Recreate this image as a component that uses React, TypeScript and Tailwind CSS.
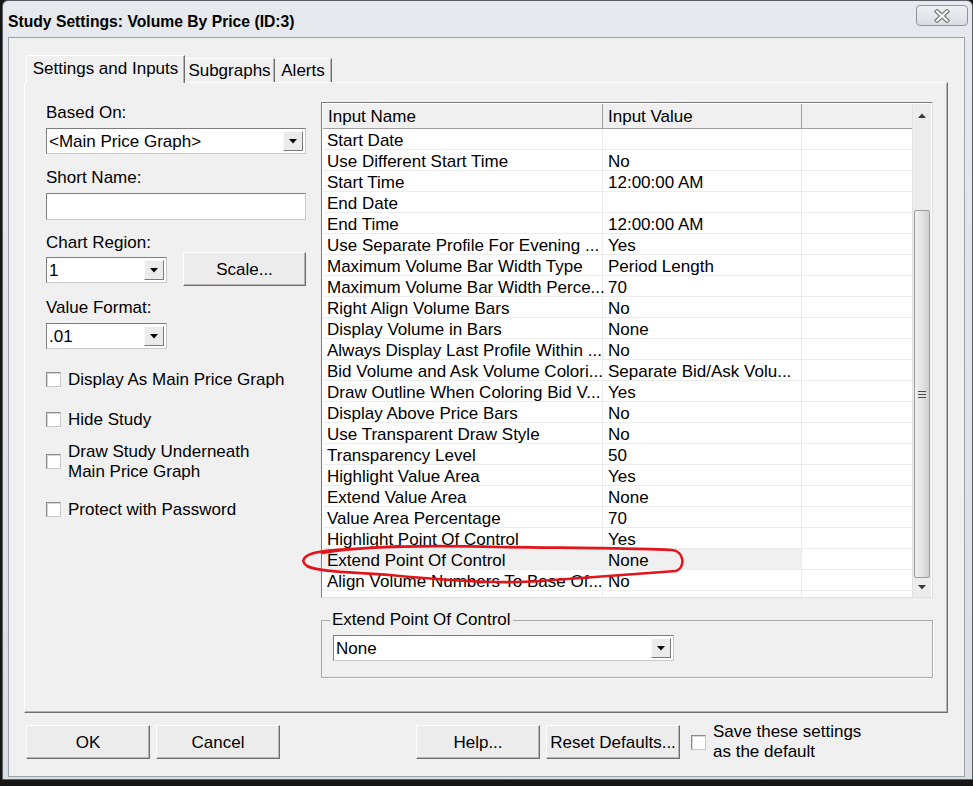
import React from "react";

const rows: [string, string][] = [
  ["Start Date", ""],
  ["Use Different Start Time", "No"],
  ["Start Time", "12:00:00 AM"],
  ["End Date", ""],
  ["End Time", "12:00:00 AM"],
  ["Use Separate Profile For Evening ...", "Yes"],
  ["Maximum Volume Bar Width Type", "Period Length"],
  ["Maximum Volume Bar Width Perce...", "70"],
  ["Right Align Volume Bars", "No"],
  ["Display Volume in Bars", "None"],
  ["Always Display Last Profile Within ...", "No"],
  ["Bid Volume and Ask Volume Colori...", "Separate Bid/Ask Volu..."],
  ["Draw Outline When Coloring Bid V...", "Yes"],
  ["Display Above Price Bars", "No"],
  ["Use Transparent Draw Style", "No"],
  ["Transparency Level", "50"],
  ["Highlight Value Area", "Yes"],
  ["Extend Value Area", "None"],
  ["Value Area Percentage", "70"],
  ["Highlight Point Of Control", "Yes"],
  ["Extend Point Of Control", "None"],
  ["Align Volume Numbers To Base Of...", "No"],
];

const SELECTED = 20;

function DownTri({ color = "#000" }: { color?: string }) {
  return (
    <svg width="8" height="5" viewBox="0 0 8 5">
      <path d="M0 0 L8 0 L4 4.5 Z" fill={color} />
    </svg>
  );
}

function Combo({ value, className }: { value: string; className: string }) {
  return (
    <div
      className={
        "flex items-stretch bg-white border border-t-[#7d7d7d] border-l-[#7d7d7d] border-r-[#c9c9c9] border-b-[#c9c9c9] " +
        className
      }
    >
      <div className="flex-1 flex items-center pl-[2px] pt-[2px] leading-[20px] whitespace-nowrap overflow-hidden">
        {value}
      </div>
      <div className="w-[20px] m-[2px] flex items-center justify-center bg-[#ebebeb] border border-t-[#fafafa] border-l-[#fafafa] border-r-[#7a7a7a] border-b-[#7a7a7a]">
        <DownTri />
      </div>
    </div>
  );
}

function Btn({ label, className }: { label: string; className: string }) {
  return (
    <button
      type="button"
      className={
        "h-[34px] flex items-center justify-center pt-[2px] bg-[#ececec] border border-t-[#fdfdfd] border-l-[#fdfdfd] border-r-[#6e6e6e] border-b-[#6e6e6e] shadow-[inset_-1px_-1px_0_#b4b4b4] leading-[20px] text-black " +
        className
      }
    >
      {label}
    </button>
  );
}

function Check() {
  return (
    <div className="w-[15px] h-[15px] shrink-0 bg-white border border-t-[#8a8a8a] border-l-[#8a8a8a] border-r-[#c8c8c8] border-b-[#c8c8c8] shadow-[inset_1px_1px_0_#d6d6d6]" />
  );
}

function Scrollbar() {
  return (
    <div className="w-[19px] flex flex-col bg-[#ececec] border-l border-[#e2e2e2]">
      <div className="h-[22px] flex items-center justify-center">
        <svg width="8" height="5" viewBox="0 0 8 5">
          <path d="M0 5 L8 5 L4 0.5 Z" fill="#3a3a3a" />
        </svg>
      </div>
      <div className="h-[84px]" />
      <div className="h-[368px] mx-[1px] rounded-[2px] border border-[#9c9c9c] bg-gradient-to-r from-[#f0f0f0] via-[#e3e3e3] to-[#cfcfcf] flex flex-col items-center justify-center gap-[2px]">
        <div className="w-[8px] h-[1px] bg-[#4a4a4a]" />
        <div className="w-[8px] h-[1px] bg-[#4a4a4a]" />
        <div className="w-[8px] h-[1px] bg-[#4a4a4a]" />
      </div>
      <div className="flex-1 flex items-center justify-center">
        <DownTri color="#3a3a3a" />
      </div>
    </div>
  );
}

function InputsTable() {
  return (
    <div className="w-[612px] h-[496px] flex border border-t-[#7c7c7c] border-l-[#7c7c7c] border-r-[#e0e0e0] border-b-[#e0e0e0] pt-[1px] pl-[1px] pr-[1px] bg-white">
      <div className="w-[589px] flex flex-col">
        <div className="h-[25px] flex bg-[#f0f0f0] border-b border-[#a0a0a0]">
          <div className="w-[280px] pl-[5px] pt-[2px] flex items-center border-r border-[#a0a0a0]">Input Name</div>
          <div className="w-[199px] pl-[5px] pt-[2px] flex items-center border-r border-[#a0a0a0]">Input Value</div>
          <div className="flex-1" />
        </div>
        {rows.map(([name, value], i) => {
          const sel = i === SELECTED;
          return (
            <div key={name} className="h-[21px] flex border-b border-[#ececec]">
              <div
                className={
                  "w-[280px] pl-[4px] pt-[3px] flex items-center whitespace-nowrap border-r border-[#ececec] " +
                  (sel ? "bg-[#f0f0f0]" : "")
                }
              >
                {name}
              </div>
              <div
                className={
                  "w-[199px] pl-[5px] pt-[3px] flex items-center whitespace-nowrap overflow-hidden border-r border-[#ececec] " +
                  (sel ? "bg-[#f0f0f0]" : "")
                }
              >
                {value}
              </div>
              <div className="flex-1" />
            </div>
          );
        })}
        <div className="flex-1 flex">
          <div className="w-[280px] border-r border-[#ececec]" />
          <div className="w-[199px] border-r border-[#ececec]" />
        </div>
      </div>
      <Scrollbar />
    </div>
  );
}

export default function App() {
  return (
    <div className="relative w-[973px] h-[786px] overflow-hidden bg-[#161616] text-[17px] text-black font-['Liberation_Sans',Arial,sans-serif]">
      <div className="ml-[2px] w-[971px] h-[780px] flex flex-col rounded-t-[6px] border border-[#5b6067] bg-gradient-to-b from-[#e6e9ed] to-[#dadee3]">
        {/* title bar */}
        <div className="h-[36px] flex items-start justify-between">
          <div className="pl-[5px] pt-[11px] text-[15.7px] font-bold leading-[20px]">
            Study Settings: Volume By Price (ID:3)
          </div>
          <div className="mt-[4px] mr-[4px] w-[52px] h-[21px] flex items-center justify-center rounded-[4px] border border-[#8c95a0] bg-gradient-to-b from-[#eef0f3] to-[#d9dde2]">
            <svg width="18" height="14" viewBox="0 0 18 14">
              <path d="M4 2.5 L14 11.5 M14 2.5 L4 11.5" stroke="#7a7a7a" strokeWidth="4.4" strokeLinecap="square" />
              <path d="M4 2.5 L14 11.5 M14 2.5 L4 11.5" stroke="#fbfbfb" strokeWidth="2.2" strokeLinecap="square" />
            </svg>
          </div>
        </div>

        {/* client area */}
        <div className="ml-[5px] w-[957px] h-[740px] border border-[#99a1aa] bg-[#f0f0f0] flex flex-col">
          {/* tabs */}
          <div className="ml-[17px] mt-[17px] h-[28px] -mb-[1px] flex items-end">
            <div className="relative z-10 w-[159px] h-[28px] flex items-center justify-center pb-[2px] bg-[#f0f0f0] border border-b-0 border-t-[#ffffff] border-l-[#ffffff] border-r-[#6e6e6e] shadow-[inset_-1px_0_0_#b4b4b4]">
              Settings and Inputs
            </div>
            <div className="w-[90px] h-[25px] flex items-center justify-center pb-[1px] border-t border-r border-t-[#ffffff] border-r-[#6e6e6e] shadow-[inset_-1px_0_0_#b4b4b4]">
              Subgraphs
            </div>
            <div className="w-[57px] h-[25px] flex items-center justify-center pb-[1px] border-t border-r border-t-[#ffffff] border-r-[#6e6e6e] shadow-[inset_-1px_0_0_#b4b4b4]">
              Alerts
            </div>
          </div>

          {/* tab panel */}
          <div className="ml-[15px] w-[924px] h-[631px] flex border border-t-[#ffffff] border-l-[#ffffff] border-r-[#6e6e6e] border-b-[#6e6e6e] shadow-[inset_-1px_-1px_0_#b4b4b4]">
            {/* left column */}
            <div className="ml-[21px] w-[260px] flex flex-col leading-[20px]">
              <div className="mt-[20px]">Based On:</div>
              <Combo value="<Main Price Graph>" className="mt-[5px] w-[260px] h-[26px]" />
              <div className="mt-[14px]">Short Name:</div>
              <div className="mt-[5px] w-[260px] h-[27px] bg-white border border-t-[#7d7d7d] border-l-[#7d7d7d] border-r-[#c9c9c9] border-b-[#c9c9c9]" />
              <div className="mt-[13px]">Chart Region:</div>
              <div className="-mt-[1px] h-[34px] flex items-start">
                <Combo value="1" className="mt-[5px] w-[121px] h-[26px]" />
                <Btn label="Scale..." className="ml-[16px] w-[123px]" />
              </div>
              <div className="mt-[12px]">Value Format:</div>
              <Combo value=".01" className="mt-[5px] w-[121px] h-[26px]" />
              <div className="mt-[19px] flex items-center gap-[7px]">
                <Check />
                <span className="pt-[2px]">Display As Main Price Graph</span>
              </div>
              <div className="mt-[18px] flex items-center gap-[7px]">
                <Check />
                <span className="pt-[2px]">Hide Study</span>
              </div>
              <div className="mt-[10px] flex items-center gap-[7px]">
                <Check />
                <span className="pt-[2px]">
                  Draw Study Underneath
                  <br />
                  Main Price Graph
                </span>
              </div>
              <div className="mt-[16px] flex items-center gap-[7px]">
                <Check />
                <span className="pt-[2px]">Protect with Password</span>
              </div>
            </div>

            {/* right column */}
            <div className="ml-[15px] mt-[19px] flex flex-col">
              <InputsTable />
              <fieldset className="mt-[12px] w-[612px] border border-[#a9a9a9] shadow-[1px_1px_0_#ffffff] pl-[11px] pb-[16px]">
                <legend className="-ml-[3px] px-[2px] leading-[20px]">Extend Point Of Control</legend>
                <Combo value="None" className="mt-[5px] w-[341px] h-[26px]" />
              </fieldset>
            </div>
          </div>

          {/* bottom buttons */}
          <div className="mt-[12px] ml-[17px] flex items-start">
            <Btn label="OK" className="w-[124px]" />
            <Btn label="Cancel" className="ml-[6px] w-[124px]" />
            <Btn label="Help..." className="ml-[136px] w-[124px]" />
            <Btn label="Reset Defaults..." className="ml-[6px] w-[134px]" />
            <div className="ml-[11px] h-[34px] flex items-center gap-[7px]">
              <Check />
              <span className="leading-[20px]">
                Save these settings
                <br />
                as the default
              </span>
            </div>
          </div>
        </div>
      </div>

      {/* red hand-drawn annotation */}
      <svg
        className="absolute inset-0 pointer-events-none"
        width="973"
        height="786"
        viewBox="0 0 973 786"
      >
        <path
          d="M322 553 C 360 546, 420 545, 500 547 C 580 548, 640 548, 672 550 C 684 551, 686 567, 676 571 C 640 574, 590 577, 540 581 C 500 584, 440 580, 390 575 C 350 572, 318 572, 307 566 C 298 560, 306 553, 325 551 C 345 549, 370 548, 400 546"
          fill="none"
          stroke="#e3141b"
          strokeWidth="2.6"
          strokeLinecap="round"
        />
      </svg>
    </div>
  );
}
